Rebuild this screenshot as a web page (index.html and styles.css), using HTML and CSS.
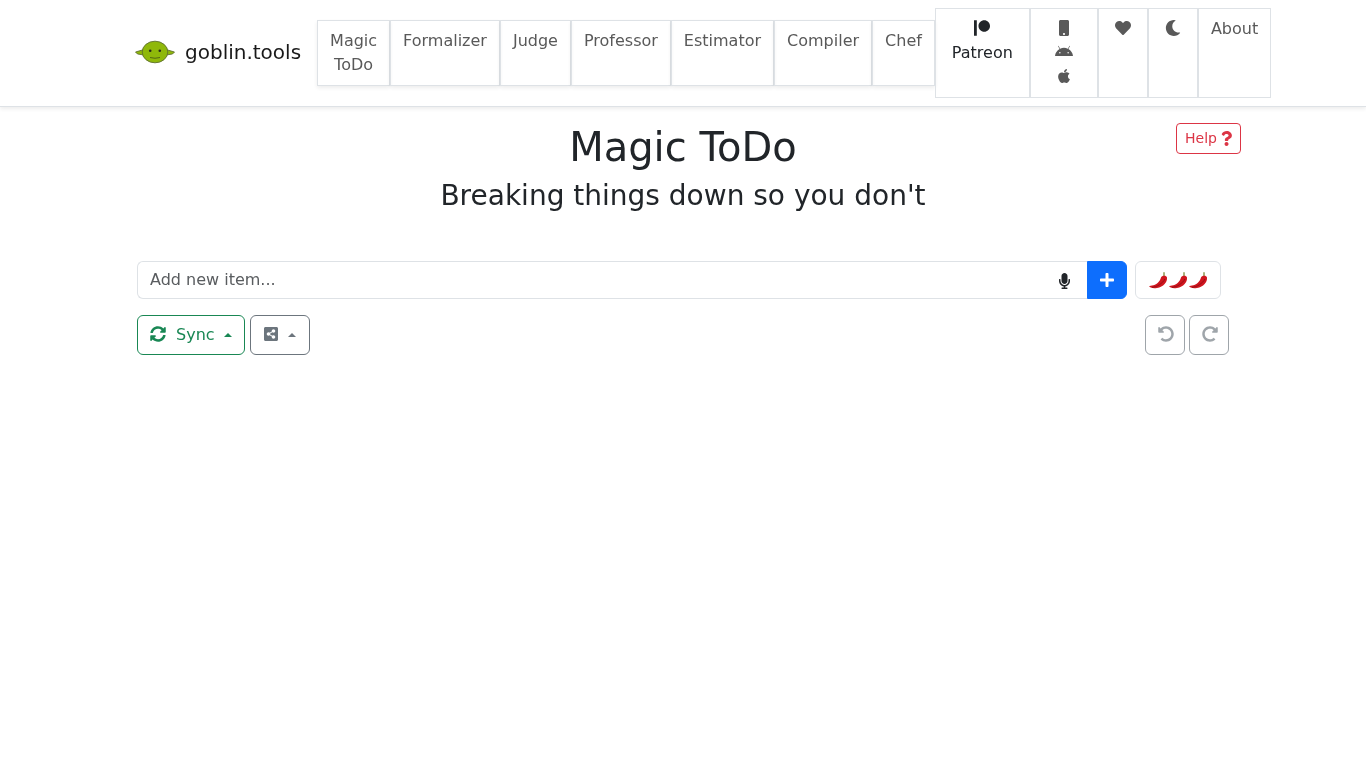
FILE: index.html
```html
<!DOCTYPE html>
<html lang="en">
<head>
<meta charset="utf-8">
<title>goblin.tools</title>
<link rel="stylesheet" href="styles.css">
</head>
<body>
<svg class="defs" aria-hidden="true">
  <symbol id="chili" viewBox="0 0 20 20">
    <path d="M16 2.300v4" stroke="#8d9a50" stroke-width="1.500" fill="none"/>
    <path d="M13 7.500C13.500 5.500 18.500 5 19 7.500C19.500 12 15.500 17 9 18C6 18.600 3 18.300 1.200 16.600C.9 16 2 15.600 4 15.400C8 15 12 12 13 7.500Z" fill="#d0161f"/>
    <path d="M4 17.300C9 17 14.500 13.500 17 9" stroke="#8e0d14" stroke-width=".9" fill="none"/>
  </symbol>
</svg>
<nav class="navbar">
  <a class="brand" href="#">
    <svg class="logo" viewBox="0 0 40 24" aria-hidden="true">
      <path d="M9 9.500L.5 12L2.500 14L9 15Z M31 9.500L39.500 12L37.500 14L31 15Z" fill="#8fb80a" stroke="#55652a" stroke-width=".8"/>
      <ellipse cx="20" cy="12" rx="12.800" ry="10.800" fill="#8fb80a" stroke="#5f6f30" stroke-width=".9"/>
      <circle cx="15.200" cy="10.800" r="1.300" fill="#2a2a1a"/>
      <circle cx="24.800" cy="10.800" r="1.300" fill="#2a2a1a"/>
      <path d="M15 17.500q5 1.500 10 0" stroke="#4d5e14" stroke-width=".9" fill="none"/>
    </svg>
    <span>goblin.tools</span>
  </a>
  <div class="nav-left">
    <a class="nav-link raised" href="#">Magic<br>ToDo</a>
    <a class="nav-link raised" href="#">Formalizer</a>
    <a class="nav-link raised" href="#">Judge</a>
    <a class="nav-link raised" href="#">Professor</a>
    <a class="nav-link raised" href="#">Estimator</a>
    <a class="nav-link raised" href="#">Compiler</a>
    <a class="nav-link raised" href="#">Chef</a>
  </div>
  <div class="nav-right">
    <a class="nav-link patreon" href="#">
      <span class="ico-line"><svg class="ico" viewBox="0 0 512 512"><path d="M512 194.800c0 101.300-82.400 183.800-183.800 183.800-101.700 0-184.400-82.400-184.400-183.800 0-101.600 82.700-184.300 184.400-184.300C429.600 10.500 512 93.200 512 194.800zM0 501.500h90v-491H0v491z"/></svg></span>
      <span>Patreon</span>
    </a>
    <a class="nav-link apps" href="#">
      <span class="ico-line"><svg class="ico" viewBox="0 0 320 512"><path d="M272 0H48C21.500 0 0 21.500 0 48v416c0 26.500 21.500 48 48 48h224c26.500 0 48-21.500 48-48V48c0-26.500-21.500-48-48-48zM160 480c-17.700 0-32-14.300-32-32s14.300-32 32-32 32 14.300 32 32-14.300 32-32 32z"/></svg></span>
      <span class="ico-line"><svg class="ico" viewBox="0 0 576 512"><path d="M420.550 301.930a24 24 0 1 1 24-24 24 24 0 0 1-24 24m-265.100 0a24 24 0 1 1 24-24 24 24 0 0 1-24 24m273.700-144.480l47.940-83a10 10 0 1 0-17.270-10l-48.540 84.070a301.250 301.250 0 0 0-246.560 0L116.180 64.450a10 10 0 1 0-17.270 10l47.940 83C64.530 202.220 8.240 285.550 0 384H576c-8.240-98.450-64.540-181.780-146.850-226.550"/></svg></span>
      <span class="ico-line"><svg class="ico" viewBox="0 0 384 512"><path d="M318.700 268.700c-.2-36.700 16.400-64.400 50-84.800-18.800-26.900-47.200-41.700-84.700-44.600-35.500-2.800-74.300 20.700-88.500 20.700-15 0-49.400-19.700-76.400-19.700C63.300 141.200 4 184.800 4 273.500q0 39.300 14.400 81.200c12.800 36.700 59 126.700 107.200 125.200 25.200-.6 43-17.900 75.800-17.900 31.800 0 48.300 17.900 76.400 17.900 48.600-.7 90.400-82.500 102.600-119.300-65.200-30.700-61.700-90-61.700-91.900zm-56.600-164.200c27.300-32.400 24.800-61.900 24-72.500-24.100 1.400-52 16.400-67.900 34.900-17.500 19.800-27.800 44.300-25.600 71.900 26.100 2 49.900-11.400 69.500-34.300z"/></svg></span>
    </a>
    <a class="nav-link square" href="#">
      <span class="ico-line"><svg class="ico" viewBox="0 0 512 512"><path d="M462.300 62.600C407.500 15.900 326 24.300 275.700 76.200L256 96.500l-19.700-20.300C186.100 24.300 104.500 15.900 49.700 62.600c-62.800 53.600-66.100 149.800-9.900 207.900l193.500 199.800c12.500 12.900 32.800 12.900 45.300 0l193.500-199.800c56.300-58.100 53-154.300-9.800-207.900z"/></svg></span>
    </a>
    <a class="nav-link square" href="#">
      <span class="ico-line"><svg class="ico" viewBox="0 0 512 512"><path d="M283.211 512c78.962 0 151.079-35.925 198.857-94.792 7.068-8.708-.639-21.430-11.562-19.350-124.203 23.654-238.262-71.576-238.262-196.954 0-72.222 38.662-138.635 101.498-174.394 9.686-5.512 7.250-20.197-3.756-22.230A258.156 258.156 0 0 0 283.211 0c-141.309 0-256 114.511-256 256 0 141.309 114.511 256 256 256z"/></svg></span>
    </a>
    <a class="nav-link" href="#">About</a>
  </div>
</nav>

<main class="container">
  <header class="page-head">
    <div class="titles">
      <h1>Magic ToDo</h1>
      <h2>Breaking things down so you don't</h2>
    </div>
    <button class="btn-help" type="button">Help <svg class="ico" viewBox="0 0 384 512"><path d="M202.021 0C122.202 0 70.503 32.703 29.914 91.026c-7.363 10.580-5.093 25.086 5.178 32.874l43.138 32.709c10.373 7.865 25.132 6.026 33.253-4.148 25.049-31.381 43.630-49.449 82.757-49.449 30.764 0 68.816 19.799 68.816 49.631 0 22.552-18.617 34.134-48.993 51.164-35.423 19.860-82.299 44.576-82.299 106.405V320c0 13.255 10.745 24 24 24h72.471c13.255 0 24-10.745 24-24v-5.773c0-42.860 125.268-44.645 125.268-160.627C377.504 66.256 286.902 0 202.021 0zM192 373.459c-38.196 0-69.271 31.075-69.271 69.271 0 38.195 31.075 69.270 69.271 69.270s69.271-31.075 69.271-69.271-31.075-69.270-69.271-69.270z"/></svg></button>
  </header>

  <div class="add-row">
    <div class="input-group">
      <input class="item-input" type="text" placeholder="Add new item...">
      <span class="mic"><svg class="ico" viewBox="0 0 352 512"><path d="M176 352c53.020 0 96-42.980 96-96V96c0-53.020-42.980-96-96-96S80 42.980 80 96v160c0 53.020 42.980 96 96 96zm160-160h-16c-8.840 0-16 7.160-16 16v48c0 74.800-64.490 134.820-140.790 127.380C96.710 376.890 48 317.110 48 250.300V208c0-8.840-7.160-16-16-16H16c-8.840 0-16 7.160-16 16v40.160c0 89.640 63.970 169.550 152 181.690V464H96c-8.840 0-16 7.160-16 16v16c0 8.840 7.160 16 16 16h160c8.840 0 16-7.160 16-16v-16c0-8.840-7.160-16-16-16h-56v-33.770C285.710 418.470 352 344.900 352 256v-48c0-8.840-7.160-16-16-16z"/></svg></span>
      <button class="btn-add" type="button" aria-label="Add"><svg class="ico" viewBox="0 0 448 512"><path d="M416 208H272V64c0-17.670-14.330-32-32-32h-32c-17.670 0-32 14.330-32 32v144H32c-17.670 0-32 14.330-32 32v32c0 17.670 14.330 32 32 32h144v144c0 17.670 14.330 32 32 32h32c17.670 0 32-14.330 32-32V304h144c17.670 0 32-14.330 32-32v-32c0-17.670-14.330-32-32-32z"/></svg></button>
    </div>
    <button class="btn-spice" type="button" aria-label="Spiciness">
      <svg class="chili"><use href="#chili"/></svg><svg class="chili"><use href="#chili"/></svg><svg class="chili"><use href="#chili"/></svg>
    </button>
  </div>

  <div class="tool-row">
    <div class="tool-left">
      <button class="btn-tool sync" type="button"><svg class="ico" viewBox="0 0 512 512"><path d="M370.720 133.280C339.458 104.008 298.888 87.962 255.848 88c-77.458.068-144.328 53.178-162.791 126.850-1.344 5.363-6.122 9.150-11.651 9.150H24.103c-7.498 0-13.194-6.807-11.807-14.176C33.933 94.924 134.813 8 256 8c66.448 0 126.791 26.136 171.315 68.685L463.030 40.970C478.149 25.851 504 36.559 504 57.941V192c0 13.255-10.745 24-24 24H345.941c-21.382 0-32.090-25.851-16.971-40.971l41.750-41.749zM32 296h134.059c21.382 0 32.090 25.851 16.971 40.971l-41.750 41.750c31.262 29.273 71.835 45.319 114.876 45.280 77.418-.07 144.315-53.144 162.787-126.849 1.344-5.363 6.122-9.150 11.651-9.150h57.304c7.498 0 13.194 6.807 11.807 14.176C478.067 417.076 377.187 504 256 504c-66.448 0-126.791-26.136-171.315-68.685L48.970 471.030C33.851 486.149 8 475.441 8 454.059V320c0-13.255 10.745-24 24-24z"/></svg><span class="sync-label">Sync</span><span class="caret"></span></button>
      <button class="btn-tool share" type="button" aria-label="Share"><svg class="ico" viewBox="0 0 448 512"><path d="M448 80v352c0 26.510-21.490 48-48 48H48c-26.510 0-48-21.490-48-48V80c0-26.510 21.490-48 48-48h352c26.510 0 48 21.490 48 48zM304 296c-14.562 0-27.823 5.561-37.783 14.671l-67.958-40.775a56.088 56.088 0 0 0 0-27.793l67.958-40.775C276.177 210.439 289.438 216 304 216c30.928 0 56-25.072 56-56s-25.072-56-56-56-56 25.072-56 56c0 4.797.605 9.453 1.740 13.897l-67.958 40.775C171.823 205.561 158.562 200 144 200c-30.928 0-56 25.072-56 56s25.072 56 56 56c14.562 0 27.823-5.561 37.783-14.671l67.958 40.775a56.190 56.190 0 0 0-1.740 13.897c0 30.928 25.072 56 56 56s56-25.072 56-56C360 321.072 334.928 296 304 296z"/></svg><span class="caret"></span></button>
    </div>
    <div class="tool-right">
      <button class="btn-tool history" type="button" aria-label="Undo"><svg class="ico" viewBox="0 0 512 512"><path d="M255.545 8c-66.269.119-126.438 26.233-170.860 68.685L48.971 40.971C33.851 25.851 8 36.559 8 57.941V192c0 13.255 10.745 24 24 24h134.059c21.382 0 32.090-25.851 16.971-40.971l-41.750-41.750c30.864-28.899 70.801-44.907 113.230-45.273 92.398-.798 170.283 73.977 169.484 169.442C423.236 348.009 349.816 424 256 424c-41.127 0-79.997-14.678-110.630-41.556-4.743-4.161-11.906-3.908-16.368.553L89.340 422.659c-4.872 4.872-4.631 12.815.482 17.433C133.798 479.813 192.074 504 256 504c136.966 0 247.999-111.033 248-247.998C504.001 119.193 392.354 7.755 255.545 8z"/></svg></button>
      <button class="btn-tool history" type="button" aria-label="Redo"><svg class="ico" viewBox="0 0 512 512"><path d="M256.455 8c66.269.119 126.437 26.233 170.859 68.685l35.715-35.715C478.149 25.851 504 36.559 504 57.941V192c0 13.255-10.745 24-24 24H345.941c-21.382 0-32.090-25.851-16.971-40.971l41.750-41.750c-30.864-28.899-70.801-44.907-113.230-45.273-92.398-.798-170.283 73.977-169.484 169.442C88.764 348.009 162.184 424 256 424c41.127 0 79.997-14.678 110.629-41.556 4.743-4.161 11.906-3.908 16.368.553l39.662 39.662c4.872 4.872 4.631 12.815-.482 17.433C378.202 479.813 319.926 504 256 504 119.034 504 8.001 392.967 8 256.002 7.999 119.193 119.646 7.755 256.455 8z"/></svg></button>
    </div>
  </div>
</main>
</body>
</html>
```
FILE: styles.css
```css
* { box-sizing: border-box; }
html, body { margin: 0; padding: 0; }
body {
  font-family: "DejaVu Sans", sans-serif;
  font-size: 16px;
  line-height: 24px;
  color: #212529;
  background: #fff;
}
a { text-decoration: none; color: inherit; }
button { font: inherit; cursor: pointer; background: none; }
.defs { display: none; }
.ico { display: block; height: 16px; width: auto; fill: currentColor; }

.navbar {
  display: flex;
  align-items: center;
  height: 107px;
  padding: 8px 0 8px 135px;
  border-bottom: 1px solid #dee2e6;
  box-shadow: 0 2px 4px rgba(0, 0, 0, .075);
  will-change: transform;
}
.brand {
  display: flex;
  align-items: center;
  gap: 10px;
  margin: 0 16px 2px 0;
  font-size: 20px;
  line-height: 30px;
  color: rgba(0, 0, 0, .9);
}
.logo { width: 40px; height: 24px; display: block; }
.nav-left, .nav-right { display: flex; }
.nav-link {
  display: block;
  padding: 8px 12px;
  border: 1px solid #dee2e6;
  color: #595959;
  text-align: center;
}
.raised { box-shadow: 0 2px 4px rgba(0, 0, 0, .075); }
.nav-right .nav-link { height: 90px; }
.ico-line { display: flex; justify-content: center; align-items: center; height: 24px; }
.ico-line .ico { margin-bottom: 2px; }
.patreon { padding: 8px 16px; color: #212529; }
.apps { width: 68px; }
.square { width: 50px; }

.container { width: 1116px; margin: 0 0 0 125px; will-change: transform; }
.page-head {
  display: grid;
  grid-template-columns: 1fr auto 1fr;
  align-items: start;
  padding-top: 16px;
}
.titles { grid-column: 2; text-align: center; }
h1 { margin: 0 0 8px; font-size: 40px; line-height: 48px; font-weight: 400; }
h2 { margin: 0; font-size: 28px; line-height: 34px; font-weight: 400; }
.btn-help {
  grid-column: 3;
  justify-self: end;
  display: flex;
  align-items: center;
  gap: 4px;
  width: 65px;
  height: 31px;
  padding: 4px 8px;
  font-size: 14px;
  line-height: 21px;
  color: #dc3545;
  border: 1px solid #dc3545;
  border-radius: 4px;
}
.btn-help .ico { height: 15px; }

.add-row {
  display: flex;
  gap: 8px;
  margin: 48px 20px 0 12px;
}
.input-group { flex: 1; display: flex; height: 38px; }
.item-input {
  flex: 1;
  min-width: 0;
  height: 38px;
  padding: 5px 12px 7px;
  font: inherit;
  color: #212529;
  background: #fff;
  border: 1px solid #dee2e6;
  border-right: 0;
  border-radius: 6px 0 0 6px;
  outline: 0;
}
.item-input::placeholder { color: #595c5f; opacity: 1; }
.mic {
  display: flex;
  align-items: center;
  padding: 2px 17.500px 0;
  border: 1px solid #dee2e6;
  border-width: 1px 0;
  color: #212529;
}
.btn-add {
  display: flex;
  align-items: center;
  justify-content: center;
  width: 40px;
  padding: 0;
  color: #fff;
  background: #0d6efd;
  border: 1px solid #0d6efd;
  border-radius: 0 6px 6px 0;
}
.btn-spice {
  display: flex;
  align-items: center;
  width: 86px;
  height: 38px;
  padding: 0 12px;
  border: 1px solid #dee2e6;
  border-radius: 6px;
}
.chili { display: block; width: 20px; height: 20px; flex: none; }

.tool-row {
  display: flex;
  justify-content: space-between;
  margin: 16px 12px 0;
}
.tool-left, .tool-right { display: flex; }
.tool-left { gap: 5px; }
.tool-right { gap: 4px; }
.btn-tool {
  display: flex;
  align-items: center;
  height: 40px;
  padding: 7px 12px;
  border: 1px solid #6c757d;
  border-radius: 6px;
  color: #6c757d;
}
.btn-tool .ico { margin-bottom: 2px; }
.sync { color: #198754; border-color: #198754; }
.sync-label { margin-left: 10px; }
.share { width: 60px; padding: 7px 12px 7px 13px; }
.share .caret { margin-left: 10px; }
.history { justify-content: center; width: 40px; padding: 0; opacity: .65; }
.history .ico { margin-left: 2px; }
.caret {
  width: 0;
  height: 0;
  margin-left: 9px;
  border-left: 4.800px solid transparent;
  border-right: 4.800px solid transparent;
  border-bottom: 4.800px solid currentColor;
}
```
